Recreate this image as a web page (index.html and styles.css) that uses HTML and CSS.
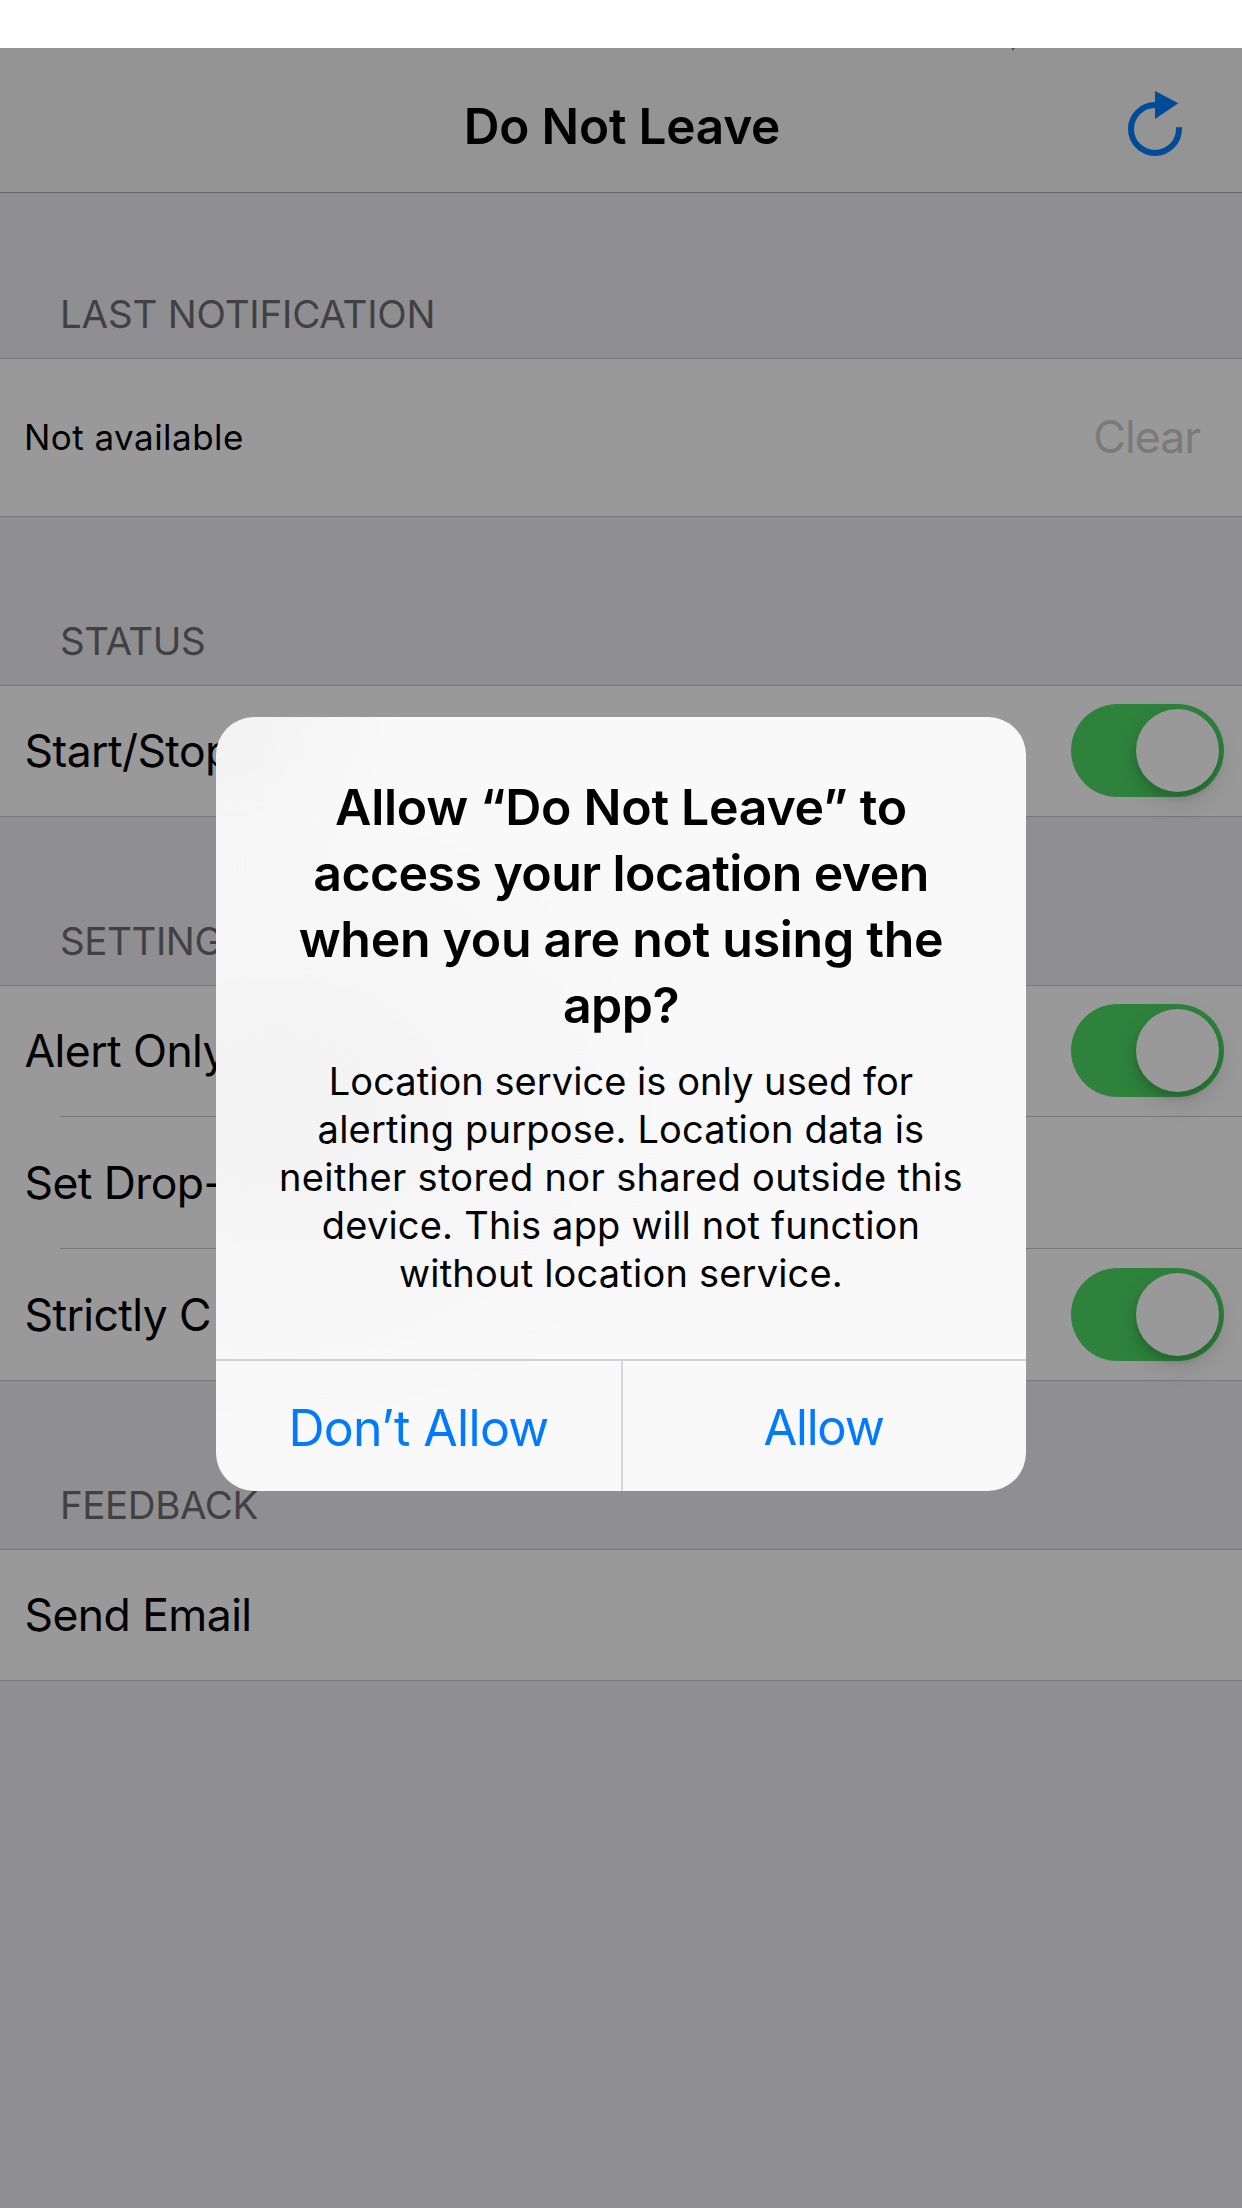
FILE: index.html
```html
<!DOCTYPE html>
<html lang="en">
<head>
<meta charset="utf-8">
<title>Do Not Leave</title>
<link rel="stylesheet" href="styles.css">
</head>
<body>
<div class="screen">
  <header class="navbar">
    <span class="navbar-glyph"></span>
    <h1 class="navbar-title">Do Not Leave</h1>
    <svg class="refresh" viewBox="0 0 56 66" width="56" height="66" aria-label="Refresh">
      <path d="M52 37.3V39A24 24 0 1 1 28 15" fill="none" stroke="currentColor" stroke-width="6"/>
      <path d="M28 1L51.3 13.3L28 29Z" fill="currentColor"/>
    </svg>
  </header>
  <main>
    <h2 class="section-title first">LAST NOTIFICATION</h2>
    <div class="group">
      <div class="row tall"><span class="small">Not available</span><span class="clear">Clear</span></div>
    </div>
    <h2 class="section-title wide tight">STATUS</h2>
    <div class="group">
      <div class="row"><span>Start/Stop</span><span class="switch"><i class="thumb"></i></span></div>
    </div>
    <h2 class="section-title wide tight">SETTINGS</h2>
    <div class="group">
      <div class="row"><span>Alert Only</span><span class="switch"><i class="thumb"></i></span></div>
      <div class="divider"></div>
      <div class="row mid"><span>Set Drop-off</span></div>
      <div class="divider"></div>
      <div class="row mid"><span>Strictly C</span><span class="switch"><i class="thumb"></i></span></div>
    </div>
    <h2 class="section-title wide tight">FEEDBACK</h2>
    <div class="group">
      <div class="row"><span>Send Email</span></div>
    </div>
  </main>
  <div class="alert" role="alertdialog">
    <h3 class="alert-title">
      <span class="line">Allow “Do Not Leave” to</span>
      <span class="line title-tight">access your location even</span>
      <span class="line">when you are not using the</span>
      <span class="line title-tight">app?</span>
    </h3>
    <p class="alert-text">
      <span class="line text-snug">Location service is only used for</span>
      <span class="line">alerting purpose. Location data is</span>
      <span class="line text-loose">neither stored nor shared outside this</span>
      <span class="line">device. This app will not function</span>
      <span class="line">without location service.</span>
    </p>
    <div class="actions">
      <button class="action">Don’t Allow</button>
      <button class="action confirm">Allow</button>
    </div>
  </div>
</div>
</body>
</html>
```
FILE: styles.css
```css
* { box-sizing: border-box; margin: 0; padding: 0; }

body {
  width: 1242px;
  height: 2208px;
  background: #fff;
  font-family: Inter, "Liberation Sans", sans-serif;
  color: #000;
}

h1, h2, h3 { font-weight: 400; }

.screen {
  position: relative;
  height: 2208px;
  padding-top: 48px;
  overflow: hidden;
}

.navbar {
  position: relative;
  display: grid;
  grid-template-columns: 1fr auto 1fr;
  align-items: center;
  height: 145px;
  padding: 12px 59px 0;
  background: #939493;
  border-bottom: 1px solid #67676b;
}

.navbar-glyph {
  position: absolute;
  left: 1012px;
  top: 0;
  border-top: 3px solid #4b4b4b;
  border-right: 3px solid transparent;
}

.navbar-title {
  grid-column: 2;
  padding-left: 2px;
  font-size: 49.5px;
  font-weight: 600;
  line-height: 60px;
  letter-spacing: -.2px;
  white-space: nowrap;
}

.refresh {
  grid-column: 3;
  justify-self: end;
  align-self: start;
  margin-top: 30px;
  color: #004c99;
}

main {
  height: 2015px;
  background: #8f8f92;
}

.section-title {
  display: flex;
  align-items: flex-end;
  padding: 0 60px 21px;
  font-size: 38.5px;
  line-height: 46px;
  letter-spacing: -.19px;
  color: #414144;
}

.first { height: 165px; }
.wide { height: 168px; }
.tight { letter-spacing: -.41px; }

.group {
  background: #999;
  border-top: 1px solid #78777a;
  border-bottom: 1px solid #78777a;
}

.row {
  display: flex;
  align-items: center;
  justify-content: space-between;
  height: 130px;
  padding: 0 18px 0 24.5px;
  font-size: 44.5px;
  letter-spacing: -.58px;
  white-space: nowrap;
}

.tall { height: 157px; padding: 0 42px 2px 24px; }
.mid { height: 131px; }
.small { font-size: 35px; letter-spacing: .46px; }
.clear { color: #7a7a7a; letter-spacing: -.95px; }

.divider {
  height: 1px;
  margin-left: 60px;
  background: #78777a;
}

.switch {
  display: flex;
  justify-content: flex-end;
  width: 153px;
  height: 93px;
  margin-bottom: 1px;
  padding: 5px;
  border-radius: 47px;
  background: #2e823c;
}

.thumb {
  width: 83px;
  height: 83px;
  border-radius: 50%;
  background: #999;
  box-shadow: 0 9px 24px rgba(0, 0, 0, .14), 0 6px 6px rgba(0, 0, 0, .1);
}

.alert {
  position: absolute;
  left: 216px;
  top: 717px;
  width: 810px;
  height: 774px;
  padding-top: 57px;
  display: flex;
  flex-direction: column;
  border-radius: 38px;
  overflow: hidden;
  text-align: center;
  white-space: nowrap;
  background:
    radial-gradient(circle at 0 0, #f2f2f2, rgba(242, 242, 242, 0) 180px),
    radial-gradient(ellipse 420px 330px at 60px 390px, #f3f3f3, rgba(243, 243, 243, 0)),
    #f9f9f9;
}

.line { display: block; }

.alert-title {
  font-size: 50px;
  font-weight: 600;
  line-height: 66px;
  letter-spacing: -.28px;
}

.title-tight { letter-spacing: -.56px; }

.alert-text {
  margin-top: 19px;
  font-size: 38px;
  line-height: 48px;
  letter-spacing: .2px;
}

.text-snug { letter-spacing: .05px; }
.text-loose { letter-spacing: .33px; }

.actions {
  display: flex;
  margin-top: auto;
  height: 132px;
  border-top: 2px solid #cfcfd4;
}

.action {
  width: 405px;
  padding: 3px 0 0;
  border: 0;
  background: none;
  font: 400 50px/60px Inter, "Liberation Sans", sans-serif;
  letter-spacing: -.66px;
  color: #007aff;
}

.confirm {
  font-size: 49px;
  letter-spacing: -1.2px;
  box-shadow: inset 2px 0 #d6d6db;
}
```
